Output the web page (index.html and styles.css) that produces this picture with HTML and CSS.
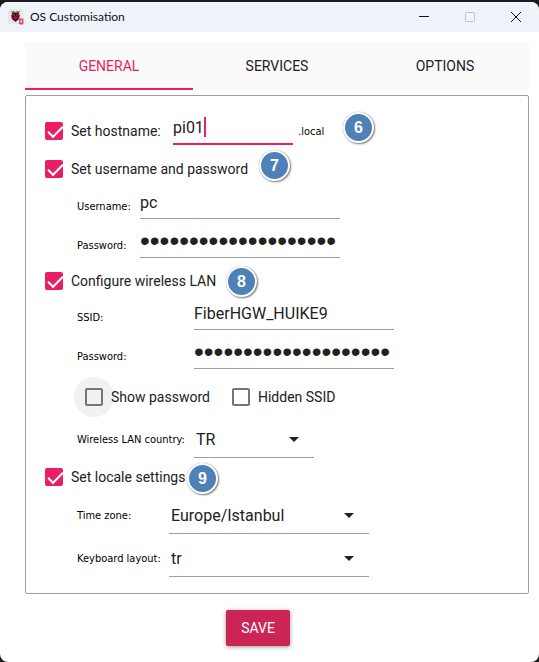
FILE: index.html
```html
<!DOCTYPE html>
<html lang="en">
<head>
<meta charset="utf-8">
<meta name="viewport" content="width=device-width, initial-scale=1">
<title>OS Customisation</title>
<link rel="stylesheet" href="styles.css">
</head>
<body>
<div class="window">
  <header class="titlebar">
    <svg class="app-icon" viewBox="0 0 16 16" aria-hidden="true">
      <rect x="0" y="0" width="15" height="15" rx="2" fill="#e6e6e6"/>
      <path d="M3 2.500L6 2l1.500 1.200L9 2l3 .5-1.500 2.500h-6z" fill="#3d8b3f"/>
      <path d="M4.500 4h6l1.200 2.500-.6 3.500-3.600 3-3.600-3-.6-3.500z" fill="#3a1020"/>
      <circle cx="5.500" cy="6" r="1.300" fill="#b3123f"/>
      <circle cx="9.500" cy="6" r="1.300" fill="#b3123f"/>
      <circle cx="7.500" cy="8.500" r="1.500" fill="#b3123f"/>
      <circle cx="4.800" cy="8.800" r="1" fill="#8d1237"/>
      <circle cx="10.200" cy="8.800" r="1" fill="#8d1237"/>
      <circle cx="7.500" cy="11.300" r="1" fill="#8d1237"/>
      <rect x="11" y="9.500" width="4.500" height="6" rx="1" fill="#e04a62"/>
      <rect x="12.500" y="11" width="1.500" height="2.500" fill="#f8dfe3"/>
    </svg>
    <h1 class="title">OS Customisation</h1>
    <button class="caption-button" type="button" aria-label="Minimize">
      <svg viewBox="0 0 12 12"><path d="M1 5.500h10" stroke="#111"/></svg>
    </button>
    <button class="caption-button" type="button" aria-label="Maximize" disabled>
      <svg viewBox="0 0 12 12"><rect x="1.500" y="1.500" width="9" height="9" rx="1" fill="none" stroke="#c0c2c6"/></svg>
    </button>
    <button class="caption-button" type="button" aria-label="Close">
      <svg viewBox="0 0 12 12"><path d="M1 1l10 10M11 1L1 11" stroke="#111"/></svg>
    </button>
  </header>

  <main class="content">
    <nav class="tabs" role="tablist">
      <button class="tab tab-active" type="button" role="tab" aria-selected="true">GENERAL</button>
      <button class="tab" type="button" role="tab" aria-selected="false">SERVICES</button>
      <button class="tab" type="button" role="tab" aria-selected="false">OPTIONS</button>
    </nav>

    <form class="form">
      <div class="panel">
        <div class="row row-hostname">
          <input class="check" type="checkbox" id="set-hostname" checked>
          <label class="check-label hostname-label" for="set-hostname">Set hostname:</label>
          <span class="hostname-field">
            <input class="text-input text-input-active" type="text" aria-label="Hostname" value="pi01">
          </span>
          <span class="suffix">.local</span>
          <span class="badge badge-6">6</span>
        </div>

        <div class="row row-user">
          <input class="check" type="checkbox" id="set-user" checked>
          <label class="check-label" for="set-user">Set username and password</label>
          <span class="badge badge-7">7</span>
        </div>
        <div class="group group-user">
          <div class="field">
            <label class="field-label" for="username">Username:</label>
            <input class="text-input" type="text" id="username" value="pc">
          </div>
          <div class="field">
            <label class="field-label" for="user-password">Password:</label>
            <input class="text-input password" type="password" id="user-password" value="aaaaaaaaaaaaaaaaaaaa">
          </div>
        </div>

        <div class="row">
          <input class="check" type="checkbox" id="set-wifi" checked>
          <label class="check-label" for="set-wifi">Configure wireless LAN</label>
          <span class="badge badge-8">8</span>
        </div>
        <div class="group group-wifi">
          <div class="field">
            <label class="field-label" for="ssid">SSID:</label>
            <input class="text-input" type="text" id="ssid" value="FiberHGW_HUIKE9">
          </div>
          <div class="field">
            <label class="field-label" for="wifi-password">Password:</label>
            <input class="text-input password" type="password" id="wifi-password" value="aaaaaaaaaaaaaaaaaaaa">
          </div>
          <div class="toggles">
            <span class="halo"><input class="check" type="checkbox" id="show-password"></span>
            <label class="check-label" for="show-password">Show password</label>
            <input class="check check-second" type="checkbox" id="hidden-ssid">
            <label class="check-label" for="hidden-ssid">Hidden SSID</label>
          </div>
          <div class="field field-select">
            <label class="field-label" for="country">Wireless LAN country:</label>
            <span class="select select-short"><select id="country"><option>TR</option></select></span>
          </div>
        </div>

        <div class="row">
          <input class="check" type="checkbox" id="set-locale" checked>
          <label class="check-label" for="set-locale">Set locale settings</label>
          <span class="badge badge-9">9</span>
        </div>
        <div class="group group-locale">
          <div class="field field-select">
            <label class="field-label" for="timezone">Time zone:</label>
            <span class="select"><select id="timezone"><option>Europe/Istanbul</option></select></span>
          </div>
          <div class="field field-select">
            <label class="field-label" for="keyboard">Keyboard layout:</label>
            <span class="select"><select id="keyboard"><option>tr</option></select></span>
          </div>
        </div>
      </div>
      <button class="save" type="button">SAVE</button>
    </form>
  </main>
</div>
</body>
</html>
```
FILE: styles.css
```css
* {
  box-sizing: border-box;
}

body {
  margin: 0;
  background: #1b1a1d;
  color: #212121;
  font: 14px/20px Roboto, sans-serif;
}

button,
input,
select {
  margin: 0;
  border: 0;
  background: none;
  color: inherit;
  font: inherit;
}

.window {
  min-height: calc(100vh - 2px);
  margin-top: 2px;
  overflow: hidden;
  border-radius: 8px;
  background: #fff;
}

.titlebar {
  display: flex;
  align-items: center;
  height: 30px;
  padding-left: 8px;
  background: #eff3fa;
}

.app-icon {
  width: 16px;
  height: 16px;
}

.title {
  flex: 1;
  margin: 0 0 0 6px;
  color: #111;
  font: 12px/16px Lato, sans-serif;
}

.caption-button {
  display: flex;
  align-items: center;
  justify-content: center;
  width: 46px;
  height: 28px;
  padding: 0;
}

.caption-button svg {
  width: 12px;
  height: 12px;
}

.content {
  padding: 10px 10px 16px 25px;
}

.tabs {
  display: flex;
  height: 48px;
  background: #fafafa;
}

.tab {
  flex: 1;
  padding: 2px 0 0;
  border-bottom: 2px solid transparent;
}

.tab-active {
  border-color: #e91e63;
  color: #e91e63;
}

.form {
  display: flex;
  flex-direction: column;
}

.panel {
  margin-top: 5px;
  padding: 16px 19px 13px;
  border: 1px solid #9e9e9e;
  border-radius: 2px;
}

.row {
  position: relative;
  display: flex;
  align-items: center;
  height: 31px;
}

.row-hostname {
  height: 38px;
}

.row-user {
  height: 37px;
}

.check {
  position: relative;
  flex: none;
  display: block;
  width: 18px;
  height: 18px;
  border: 2px solid #757575;
  border-radius: 2px;
  appearance: none;
}

.check:checked {
  border-color: #e91e63;
  background: #e91e63;
}

.check:checked::before {
  content: "";
  display: block;
  width: 13px;
  height: 6px;
  margin: 2px 0 0 1px;
  border: solid #fff;
  border-width: 0 0 2px 2px;
  transform: rotate(-45deg);
}

.halo {
  position: relative;
}

.halo::before {
  content: "";
  position: absolute;
  inset: -11px;
  border-radius: 50%;
  background: #f1f1f1;
}

.check-label {
  position: relative;
  margin-left: 8px;
}

.hostname-label {
  width: 102px;
}

.hostname-field {
  position: relative;
  display: flex;
  width: 120px;
}

.hostname-field::after {
  content: "";
  position: absolute;
  top: 0;
  left: 31px;
  width: 2px;
  height: 20px;
  background: #e91e63;
}

.text-input {
  width: 200px;
  height: 25px;
  padding: 0 0 7px;
  border-bottom: 1px solid #9e9e9e;
  border-radius: 0;
  font-size: 16px;
  line-height: 16px;
}

.text-input-active {
  width: 100%;
  height: 28px;
  padding-bottom: 5px;
  border-bottom: 2px solid #e91e63;
}

.password {
  padding-bottom: 8px;
  font-family: "Liberation Sans", sans-serif;
  font-size: 28px;
}

.suffix,
.field-label {
  color: #000;
  font: 11px/16px "DejaVu Sans Condensed", "DejaVu Sans", sans-serif;
}

.suffix {
  padding-top: 2px;
  margin-left: 5px;
}

.group {
  padding-left: 32px;
}

.field {
  display: flex;
  align-items: center;
  height: 39px;
}

.field-select {
  height: 43px;
}

.field-label {
  white-space: nowrap;
}

.group-user .field-label {
  width: 63px;
}

.group-wifi .field-label {
  width: 117px;
}

.group-locale .field-label {
  width: 92px;
}

.group-wifi,
.group-locale {
  padding-top: 2px;
}

.toggles {
  display: flex;
  align-items: center;
  height: 42px;
  padding-left: 8px;
}

.check-second {
  margin-left: 22px;
}

.select {
  position: relative;
  width: 200px;
}

.select-short {
  width: 120px;
}

.select select {
  display: block;
  width: 100%;
  height: 36px;
  padding: 2px 2px 0;
  border-bottom: 1px solid #9e9e9e;
  border-radius: 0;
  font-size: 16px;
  appearance: none;
}

.select::after {
  content: "";
  position: absolute;
  top: 15px;
  right: 15px;
  border: 5px solid transparent;
  border-top-color: #212121;
  border-bottom: 0;
  pointer-events: none;
}

.badge {
  position: absolute;
  width: 31px;
  height: 31px;
  border: 2px solid #fff;
  border-radius: 50%;
  background: #4f81b9;
  box-shadow: 1px 1px 2px #777, 0 0 1px #999;
  color: #fff;
  font: bold 16px/27px "Liberation Sans", sans-serif;
  text-align: center;
}

.badge-6 {
  top: 0;
  left: 298px;
}

.badge-7 {
  top: 0;
  left: 214px;
}

.badge-8 {
  top: 1px;
  left: 181px;
}

.badge-9 {
  top: 2px;
  left: 142px;
}

.save {
  align-self: center;
  height: 36px;
  margin: 16px 38px 0 0;
  padding: 0 15px;
  border-radius: 2px;
  background: #cd2456;
  box-shadow: 0 1px 4px #0006;
  color: #fff;
}
```
